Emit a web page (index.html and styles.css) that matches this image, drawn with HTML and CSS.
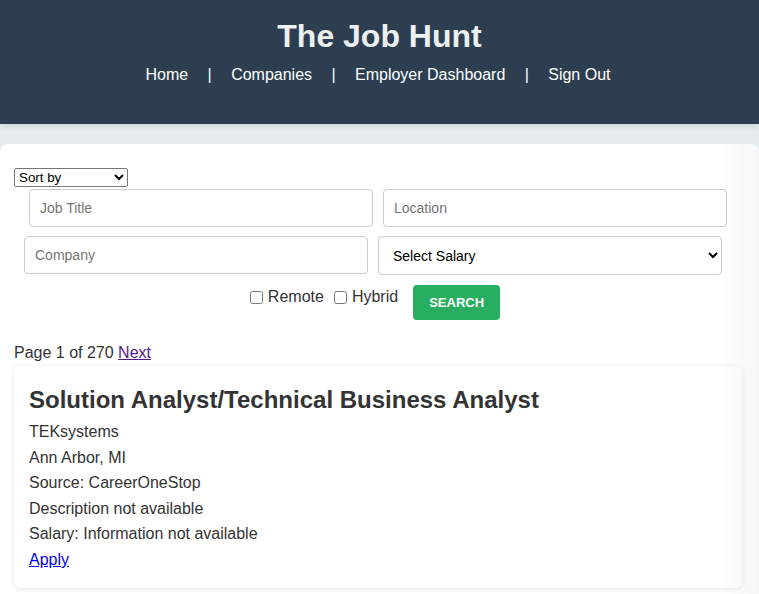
FILE: index.html
```html
<!DOCTYPE html>
<html lang="en">
<head>
<meta charset="utf-8">
<title>The Job Hunt</title>
<link rel="stylesheet" href="styles.css">
</head>
<body>
<header class="site-header">
  <h1 class="site-title">The Job Hunt</h1>
  <nav class="site-nav">
    <a href="#" class="nav-link">Home</a><span class="sep">|</span><a href="#" class="nav-link">Companies</a><span class="sep">|</span><a href="#" class="nav-link">Employer Dashboard</a><span class="sep">|</span><a href="#" class="nav-link">Sign Out</a>
  </nav>
</header>
<main class="container">
  <select class="sort-select">
    <option>Sort by</option>
    <option>Date</option>
    <option>Salary</option>
  </select>
  <form class="search-form">
    <div class="form-row row-first">
      <input class="field" type="text" placeholder="Job Title">
      <input class="field" type="text" placeholder="Location">
    </div>
    <div class="form-row">
      <input class="field" type="text" placeholder="Company">
      <select class="field field-select">
        <option>Select Salary</option>
      </select>
    </div>
    <div class="form-actions">
      <label class="check"><input type="checkbox" class="check-box">Remote</label>
      <label class="check"><input type="checkbox" class="check-box">Hybrid</label>
      <button type="button" class="search-btn">SEARCH</button>
    </div>
  </form>
  <p class="pager">Page 1 of 270 <a href="#" class="pager-link">Next</a></p>
  <article class="job-card">
    <h2 class="job-title">Solution Analyst/Technical Business Analyst</h2>
    <p class="job-line">TEKsystems</p>
    <p class="job-line">Ann Arbor, MI</p>
    <p class="job-line">Source: CareerOneStop</p>
    <p class="job-line">Description not available</p>
    <p class="job-line">Salary: Information not available</p>
    <a href="#" class="job-apply">Apply</a>
  </article>
</main>
</body>
</html>
```

FILE: styles.css
```css
html, body {
  margin: 0;
  padding: 0;
}
body {
  background: #e6ecee;
  font-family: "Liberation Sans", Arial, sans-serif;
  color: #333;
  overflow: hidden;
}
.site-header {
  background: #2c3e50;
  height: 124px;
  box-sizing: border-box;
  padding-top: 18px;
  text-align: center;
  box-shadow: 0 2px 6px rgba(0,0,0,0.12);
  position: relative;
  z-index: 1;
}
.site-title {
  margin: 0;
  font-size: 32px;
  font-weight: bold;
  color: #ecf0f1;
  line-height: 37px;
}
.site-nav {
  margin-top: 11px;
  font-size: 16px;
  line-height: 18px;
  color: #fff;
  padding-right: 3px;
}
.nav-link {
  color: #fff;
  text-decoration: none;
}
.sep {
  margin: 0 19.4px;
  color: #fff;
}
.container {
  margin-top: 20px;
  background: #fff;
  border-radius: 8px 8px 0 0;
  padding: 24px 14px 6px;
  position: relative;
  min-height: 420px;
  box-sizing: border-box;
}
.container::after {
  content: "";
  position: absolute;
  top: 0;
  right: 0;
  bottom: 0;
  width: 40px;
  background: linear-gradient(to right, rgba(0,0,0,0), rgba(0,0,0,0.035));
  pointer-events: none;
  border-top-right-radius: 8px;
}
.sort-select {
  display: block;
  width: 114px;
  height: 19px;
  font-family: "Liberation Sans", Arial, sans-serif;
  font-size: 13.33px;
  margin: 0;
  color: #000;
}
.search-form {
  width: 720px;
  padding-left: 10px;
  margin-top: 2px;
}
.form-row {
  display: flex;
  gap: 10px;
  margin-bottom: 10px;
}
.row-first {
  margin-left: 5px;
  gap: 10px;
  margin-bottom: 9px;
}
.field {
  flex: 0 0 344px;
  width: 344px;
  height: 38px;
  box-sizing: border-box;
  border: 1px solid #ccc;
  border-radius: 4px;
  padding: 0 10px;
  font-family: "Liberation Sans", Arial, sans-serif;
  font-size: 14px;
  color: #333;
  background: #fff;
  margin: 0;
}
.field::placeholder {
  color: #757575;
}
.field-select {
  height: 39px;
  color: #000;
  padding: 0 10px;
}
.form-actions {
  display: flex;
  justify-content: center;
  align-items: flex-start;
  width: 698px;
  margin-top: 0;
}
.check {
  font-size: 16px;
  color: #333;
  margin-right: 6px;
  line-height: 18px;
  margin-top: 3px;
}
.check-box {
  margin: 3px 5px 3px 4px;
  vertical-align: -2px;
}
.search-btn {
  margin-left: 9px;
  width: 87px;
  height: 35px;
  background: #27ae60;
  color: #fff;
  border: none;
  border-radius: 4px;
  font-family: "Liberation Sans", Arial, sans-serif;
  font-weight: bold;
  font-size: 13px;
  padding: 0;
}
.pager {
  margin: 24px 0 4px;
  font-size: 16px;
  line-height: 18px;
  color: #333;
}
.pager-link {
  color: #551a8b;
}
.job-card {
  background: #fff;
  border-radius: 6px;
  box-shadow: 0 1px 5px rgba(0,0,0,0.1);
  padding: 20px 15px 16px;
  width: 728px;
  box-sizing: border-box;
}
.job-title {
  margin: 0 0 5px;
  font-size: 24px;
  line-height: 28px;
  font-weight: bold;
  color: #333;
}
.job-line {
  margin: 0;
  font-size: 16px;
  line-height: 25.6px;
  color: #333;
}
.job-apply {
  display: inline-block;
  font-size: 16px;
  line-height: 25px;
  color: #0000ee;
}
```
